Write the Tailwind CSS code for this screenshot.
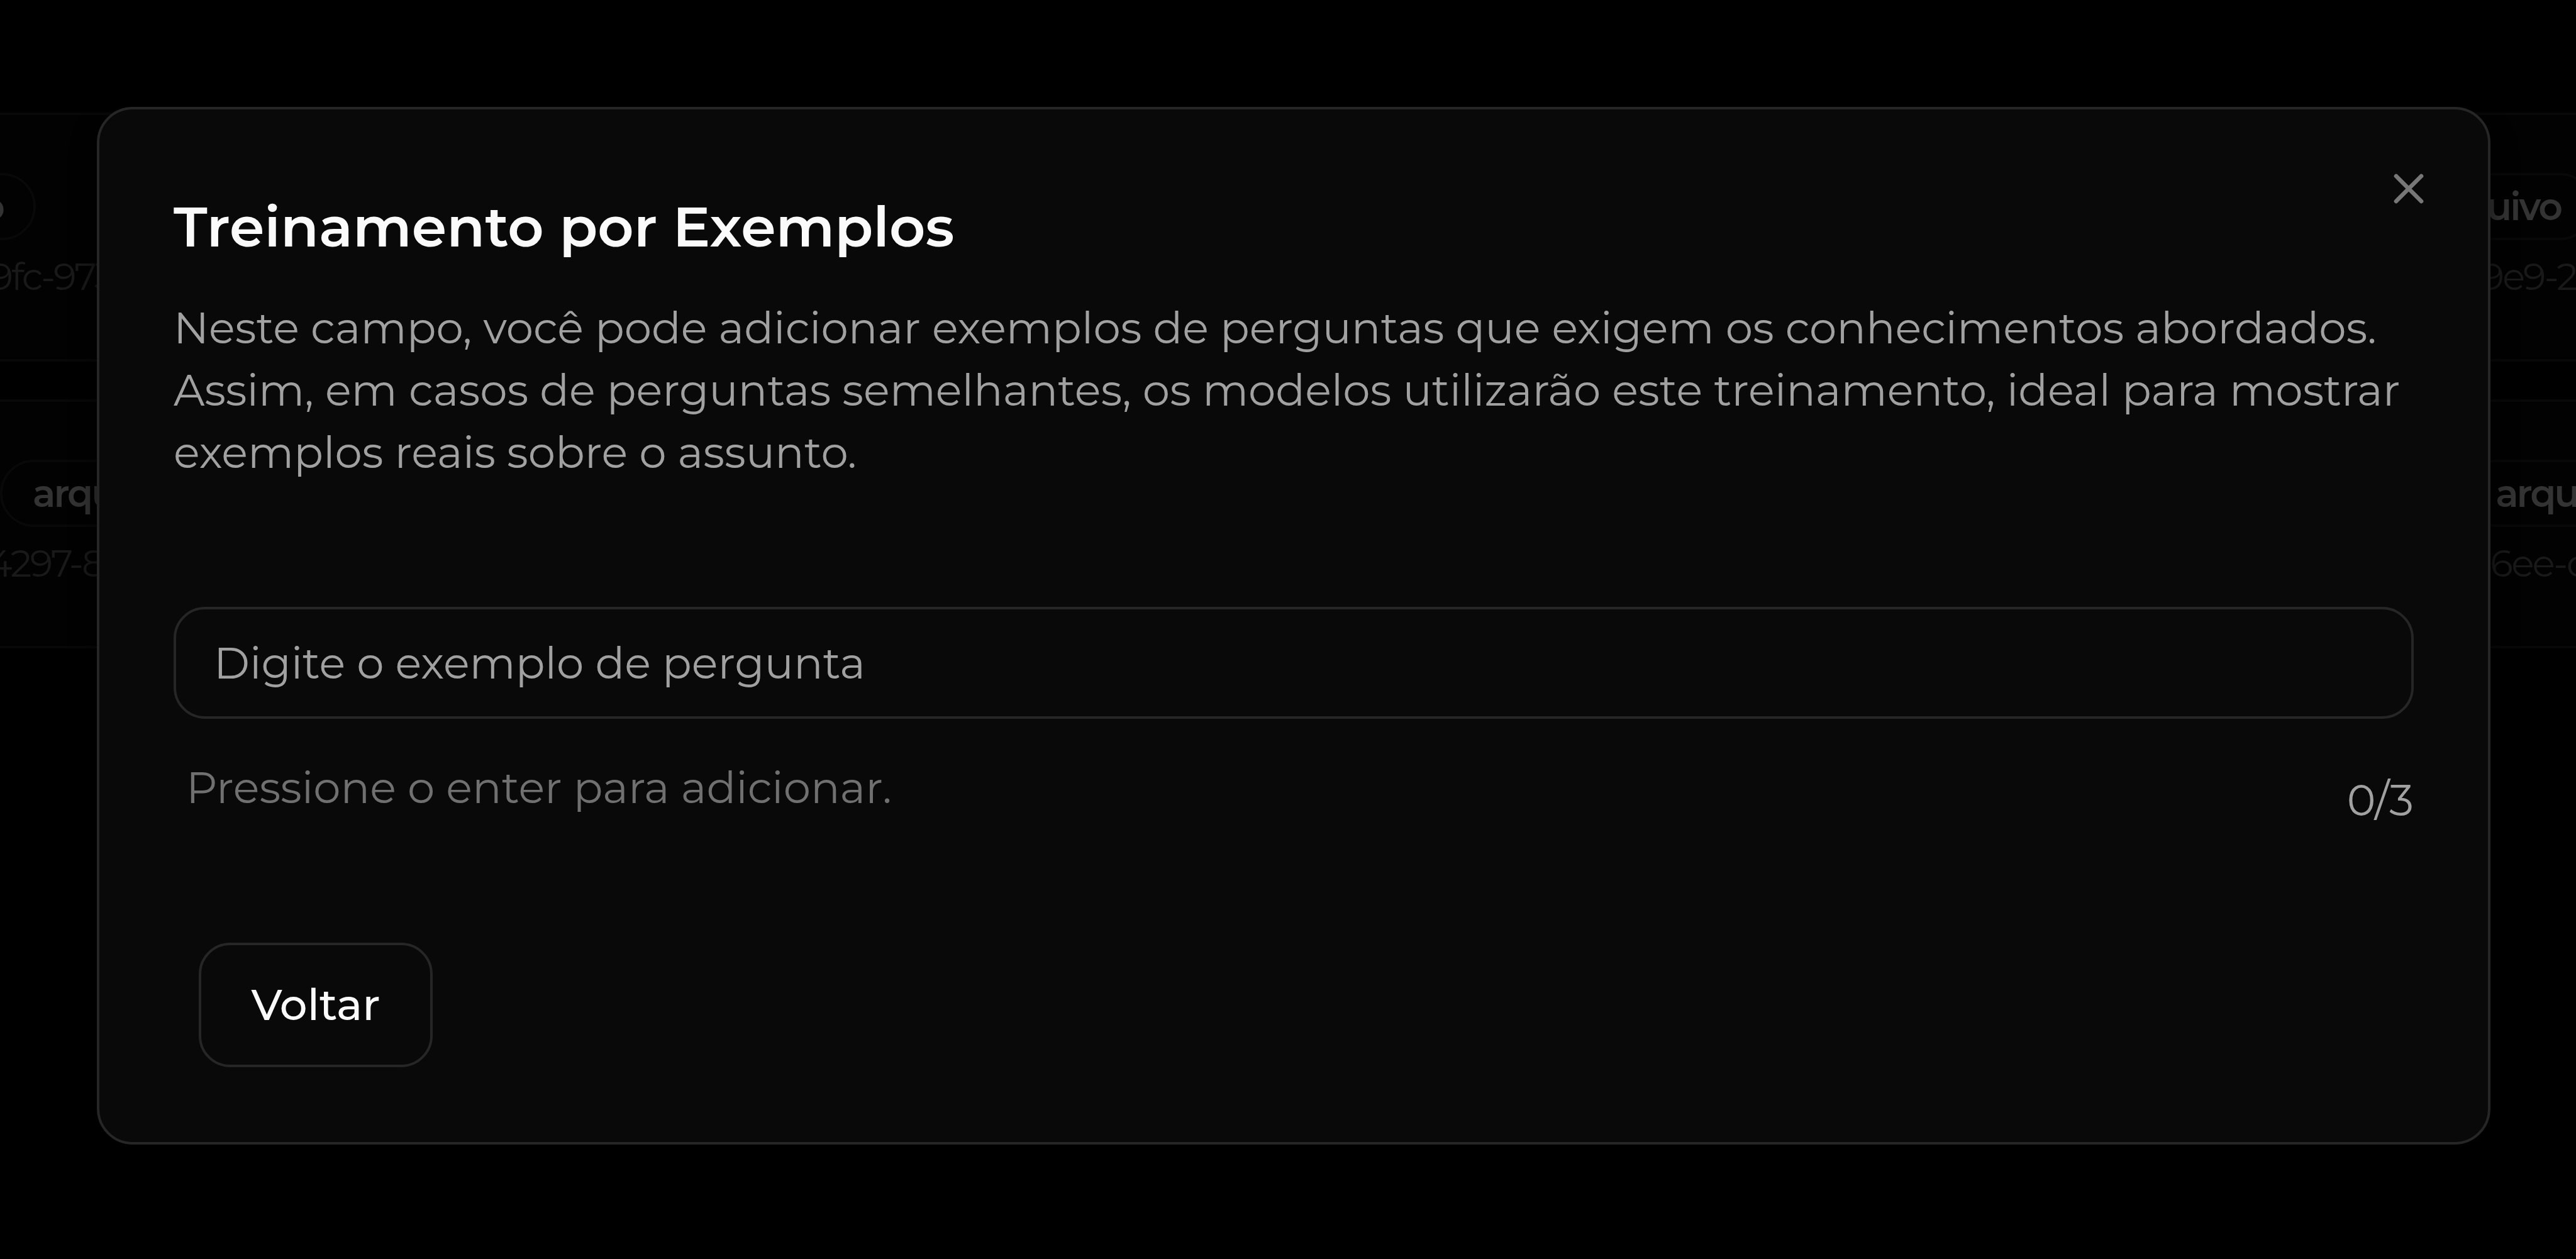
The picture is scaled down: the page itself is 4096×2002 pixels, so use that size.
<!DOCTYPE html>
<html lang="pt-BR">
<head>
<meta charset="utf-8">
<meta name="viewport" content="width=device-width, initial-scale=1">
<title>Treinamento por Exemplos</title>
<script src="https://cdn.jsdelivr.net/npm/@tailwindcss/browser@4"></script>
</head>
<body class="grid min-h-screen grid-cols-1 overflow-hidden bg-black font-['Montserrat','Inter',sans-serif]">

  <!-- Dimmed list of files behind the dialog -->
  <main class="col-start-1 row-start-1 flex min-w-0 flex-col gap-[60px] overflow-hidden pt-[179px] text-[60px] leading-[76px] tracking-tighter" aria-hidden="true">
    <section class="flex h-[396px] justify-between border-y-4 border-[#080808] bg-[#020202] pt-[92px]">
      <div class="-ml-[259px] flex flex-col items-end">
        <span class="flex h-[107px] items-center rounded-full border-4 border-[#080808] px-[48px] font-semibold text-[#333333]">arquivo</span>
        <span class="-mr-[124px] mt-[20px] text-[#191919]">9fc-973</span>
      </div>
      <div class="-mr-[28px] flex flex-col items-end">
        <span class="flex h-[107px] items-center rounded-full border-4 border-[#080808] px-[48px] font-semibold text-[#333333]">arquivo</span>
        <span class="mr-[28px] mt-[20px] text-[#191919]">9e9-2</span>
      </div>
    </section>
    <section class="flex h-[396px] justify-between border-y-4 border-[#080808] bg-[#020202] pt-[92px]">
      <div class="flex flex-col items-start">
        <span class="flex h-[107px] items-center rounded-full border-4 border-[#080808] px-[48px] font-semibold text-[#333333]">arquivo</span>
        <span class="-ml-[20px] mt-[20px] text-[#191919]">4297-8</span>
      </div>
      <div class="-mr-[136px] flex flex-col items-start">
        <span class="flex h-[107px] items-center rounded-full border-4 border-[#080808] px-[48px] font-semibold text-[#333333]">arquivo</span>
        <span class="ml-[43px] mt-[20px] text-[#191919]">6ee-c</span>
      </div>
    </section>
  </main>

  <!-- Dialog -->
  <div role="dialog" aria-modal="true" aria-labelledby="dialog-title" aria-describedby="dialog-description" class="relative col-start-1 row-start-1 mt-[170px] mr-[136px] ml-[154px] flex flex-col self-start rounded-[57px] border-4 border-[#262626] bg-[#090909] px-[118px] pt-[132px] pb-[119px] shadow-2xl shadow-black">
    <button type="button" aria-label="Fechar" class="absolute top-[86px] right-[86px] size-[80px] text-[#777777]">
      <svg viewBox="0 0 24 24" fill="none" stroke="currentColor" stroke-width="2" stroke-linecap="round" stroke-linejoin="round" class="size-full"><path d="M18 6 6 18M6 6l12 12"/></svg>
    </button>

    <h1 id="dialog-title" class="text-[89px] leading-[108px] font-semibold text-[#fafafa]">Treinamento por Exemplos</h1>
    <p id="dialog-description" class="mt-[58px] text-[69px] leading-[99px] text-[#a1a1a1]">Neste campo, você pode adicionar exemplos de perguntas que exigem os conhecimentos abordados. Assim, em casos de perguntas semelhantes, os modelos utilizarão este treinamento, ideal para mostrar exemplos reais sobre o assunto.</p>

    <input type="text" aria-label="Exemplo de pergunta" placeholder="Digite o exemplo de pergunta" class="mt-[196px] h-[178px] w-full rounded-[50px] border-4 border-[#262626] bg-transparent px-[60px] text-[69px] text-[#fafafa] placeholder:text-[#a1a1a1]">

    <div class="mt-[60px] flex items-start justify-between text-[69px] leading-[99px]">
      <p class="ml-[20px] text-[#707070]">Pressione o enter para adicionar.</p>
      <p class="mt-[20px] text-[#a1a1a1]">0/3</p>
    </div>

    <button type="button" class="mt-[177px] ml-[40px] h-[198px] w-[372px] rounded-[50px] border-4 border-[#262626] text-[69px] font-medium text-[#fafafa]">Voltar</button>
  </div>

</body>
</html>
